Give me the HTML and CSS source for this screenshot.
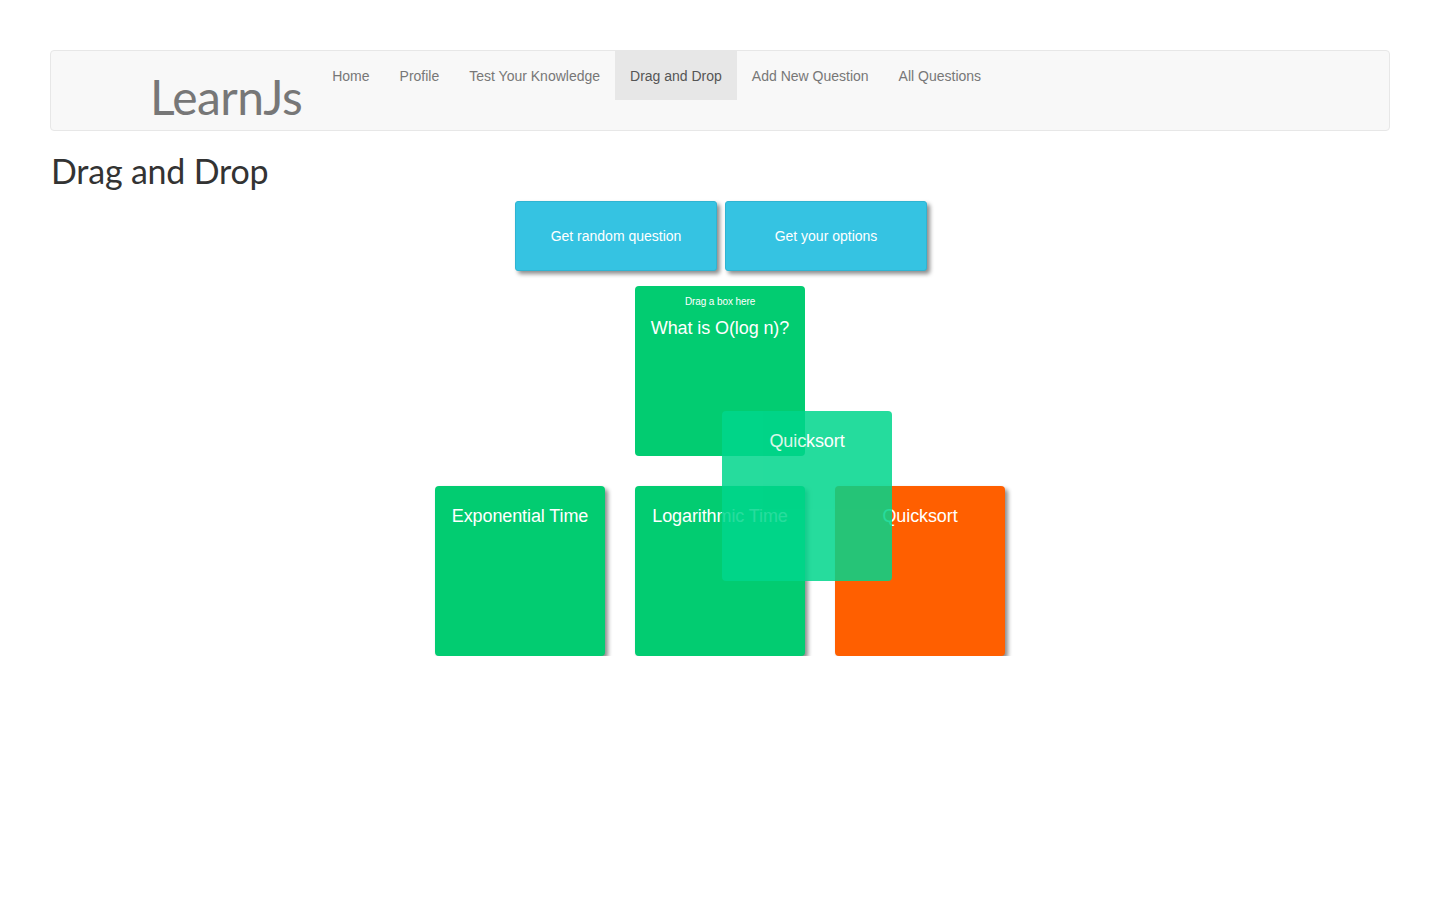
FILE: index.html
```html
<!DOCTYPE html>
<html>
<head>
<meta charset="utf-8">
<title>LearnJs - Drag and Drop</title>
<link rel="stylesheet" href="styles.css">
</head>
<body>
<div class="page">
  <nav class="navbar">
    <a class="brand" href="#">LearnJs</a>
    <ul class="nav">
      <li><a href="#">Home</a></li>
      <li><a href="#">Profile</a></li>
      <li><a href="#">Test Your Knowledge</a></li>
      <li class="active"><a href="#">Drag and Drop</a></li>
      <li><a href="#">Add New Question</a></li>
      <li><a href="#">All Questions</a></li>
    </ul>
  </nav>
  <h1 class="title">Drag and Drop</h1>
  <div class="actions">
    <button class="btn">Get random question</button>
    <button class="btn">Get your options</button>
  </div>
  <div class="target-wrap">
    <div class="target">
      <div class="hint">Drag a box here</div>
      <div class="question">What is O(log n)?</div>
    </div>
  </div>
  <div class="options">
    <div class="box green">Exponential Time</div>
    <div class="box green">Logarithmic Time</div>
    <div class="box orange">Quicksort</div>
  </div>
</div>
<div class="dragging">Quicksort</div>
</body>
</html>
```

FILE: styles.css
```css
* { box-sizing: border-box; }
html, body { margin: 0; padding: 0; background: #fff; }
body {
  position: relative;
  font-family: "Liberation Sans", Arial, sans-serif;
  font-size: 14px;
  color: #333;
}
.page { padding: 50px 50px 0; }

.navbar {
  display: flex;
  align-items: flex-start;
  height: 81px;
  background: #f8f8f8;
  border: 1px solid #e7e7e7;
  border-radius: 4px;
}
.brand {
  display: block;
  padding: 22px 15px 0 99px;
  font-family: Lato, "Open Sans", sans-serif;
  font-size: 48px;
  line-height: 48px;
  color: #777;
  text-decoration: none;
  letter-spacing: -0.6px;
}
.nav {
  display: flex;
  list-style: none;
  margin: 0;
  padding: 0;
}
.nav a {
  display: block;
  padding: 16px 15px 14px;
  line-height: 19px;
  font-size: 14px;
  color: #777;
  text-decoration: none;
}
.nav .active a {
  background: #e7e7e7;
  color: #555;
}

.title {
  margin: 21px 0 11px 1px;
  font-family: Lato, "Open Sans", sans-serif;
  font-weight: 400;
  font-size: 34px;
  line-height: 38px;
  color: #333;
  letter-spacing: -0.2px;
}

.actions {
  display: flex;
  justify-content: center;
  gap: 8px;
  padding-left: 2px;
}
.btn {
  width: 202px;
  height: 70px;
  background: #35c3e2;
  border: 1px solid #2fb4d2;
  border-radius: 3px;
  box-shadow: 3px 3px 4px rgba(0, 0, 0, 0.45);
  color: #fff;
  font-family: "Liberation Sans", Arial, sans-serif;
  font-size: 14px;
  letter-spacing: 0;
}

.target-wrap {
  display: flex;
  justify-content: center;
  margin-top: 15px;
}
.target {
  width: 170px;
  height: 170px;
  background: #02cc71;
  border-radius: 4px;
  color: #fff;
  text-align: center;
  padding-top: 10px;
}
.hint {
  font-size: 10px;
  line-height: 12px;
  letter-spacing: -0.1px;
}
.question {
  margin-top: 10px;
  font-size: 18px;
  line-height: 20px;
  letter-spacing: -0.1px;
}

.options {
  display: flex;
  justify-content: center;
  gap: 30px;
  margin-top: 30px;
}
.box {
  width: 170px;
  height: 170px;
  border-radius: 4px;
  padding-top: 20px;
  color: #fff;
  text-align: center;
  font-size: 18px;
  line-height: 20px;
  letter-spacing: -0.1px;
  box-shadow: 3px 3px 4px rgba(0, 0, 0, 0.45);
}
.green { background: #02cc71; }
.orange { background: #ff5f00; }

.dragging {
  position: absolute;
  left: 722px;
  top: 411px;
  width: 170px;
  height: 170px;
  border-radius: 4px;
  padding-top: 20px;
  background: #00d68c;
  opacity: 0.85;
  color: #fff;
  text-align: center;
  font-size: 18px;
  line-height: 20px;
  letter-spacing: -0.1px;
}
```
